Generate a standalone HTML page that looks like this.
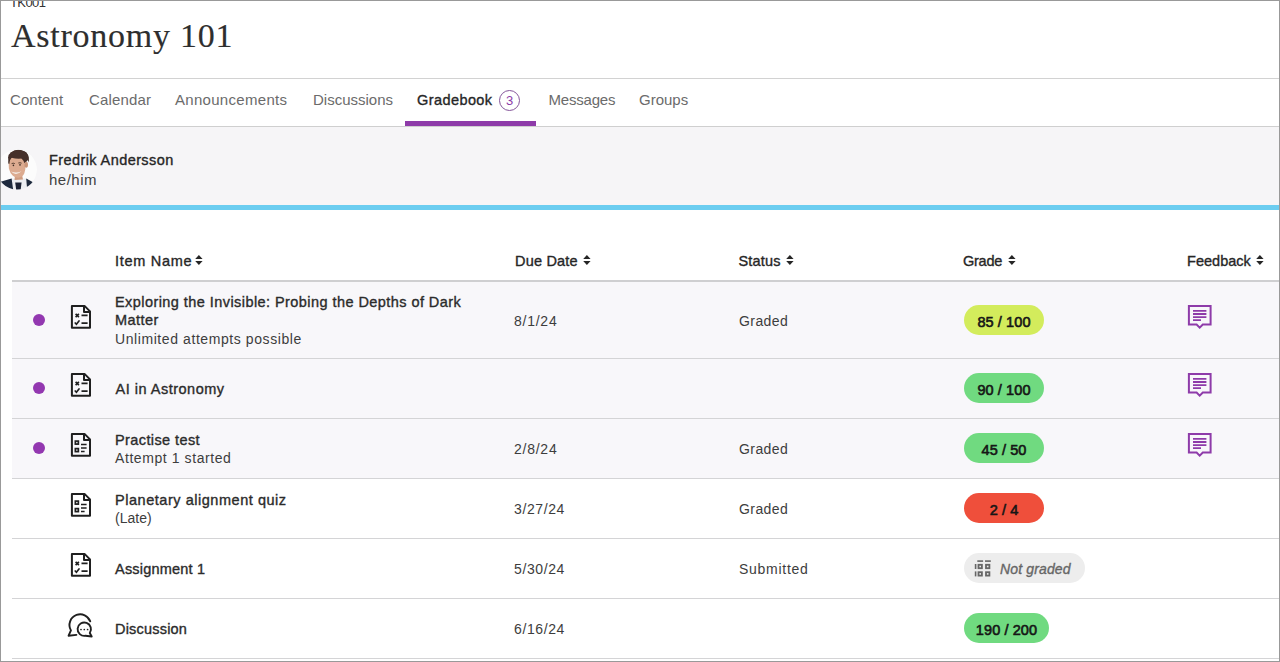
<!DOCTYPE html>
<html><head><meta charset="utf-8">
<style>
*{box-sizing:border-box;margin:0;padding:0}
html,body{width:1280px;height:662px;overflow:hidden;background:#fff}
body{font-family:"Liberation Sans",sans-serif;color:#262626;position:relative}
.t{position:absolute;white-space:nowrap;line-height:1}
.r{position:absolute;display:block}
.pill{position:absolute;height:30px;border-radius:15px;font-size:14.5px;font-weight:normal;-webkit-text-stroke:0.6px #161616;text-align:center;line-height:30px;letter-spacing:0.1px;font-family:"Liberation Sans",sans-serif}
.frame{position:absolute;left:0;top:0;width:1280px;height:662px;border:1px solid #999;z-index:10}
</style></head><body>
<div class="t" style="left:10px;top:-4px;font-size:13px;font-weight:normal;font-style:normal;letter-spacing:-0.6px;color:#333;font-family:'Liberation Sans',sans-serif;">TK001</div>
<div class="t" style="left:11px;top:19px;font-size:34px;letter-spacing:0.75px;color:#2e2e2e;font-family:'Liberation Serif',serif;line-height:1;-webkit-text-stroke:0.15px #2e2e2e">Astronomy 101</div>
<div class="r" style="left:0px;top:78px;width:1280px;height:1px;background:#d2d2d2;"></div>
<div class="t" style="left:10px;top:92px;font-size:15px;font-weight:normal;font-style:normal;letter-spacing:0.1px;color:#6b6b6b;font-family:'Liberation Sans',sans-serif;">Content</div>
<div class="t" style="left:89px;top:92px;font-size:15px;font-weight:normal;font-style:normal;letter-spacing:0.16px;color:#6b6b6b;font-family:'Liberation Sans',sans-serif;">Calendar</div>
<div class="t" style="left:175px;top:92px;font-size:15px;font-weight:normal;font-style:normal;letter-spacing:0.3px;color:#6b6b6b;font-family:'Liberation Sans',sans-serif;">Announcements</div>
<div class="t" style="left:313px;top:92px;font-size:15px;font-weight:normal;font-style:normal;letter-spacing:0px;color:#6b6b6b;font-family:'Liberation Sans',sans-serif;">Discussions</div>
<div class="t" style="left:417px;top:93px;font-size:14.5px;font-weight:normal;font-style:normal;letter-spacing:0.42px;color:#262626;font-family:'Liberation Sans',sans-serif;-webkit-text-stroke:0.35px #262626;">Gradebook</div>
<div class="r" style="left:499px;top:90px;width:21px;height:21px;border:1px solid #85559a;border-radius:50%"></div>
<div class="t" style="left:506px;top:94px;font-size:13px;font-weight:normal;font-style:normal;letter-spacing:0px;color:#8e3ba9;font-family:'Liberation Sans',sans-serif;">3</div>
<div class="t" style="left:548.5px;top:92px;font-size:15px;font-weight:normal;font-style:normal;letter-spacing:-0.2px;color:#6b6b6b;font-family:'Liberation Sans',sans-serif;">Messages</div>
<div class="t" style="left:639px;top:92px;font-size:15px;font-weight:normal;font-style:normal;letter-spacing:0px;color:#6b6b6b;font-family:'Liberation Sans',sans-serif;">Groups</div>
<div class="r" style="left:404.5px;top:121px;width:131.5px;height:4.6px;background:#8e3ba9;"></div>
<div class="r" style="left:0px;top:126px;width:1280px;height:1px;background:#cfcfcf;"></div>
<div class="r" style="left:0px;top:127px;width:1280px;height:78px;background:#f6f5f7;"></div>
<div class="r" style="left:0px;top:205px;width:1280px;height:5px;background:#6ccdf0;"></div>
<div class="t" style="left:49px;top:153px;font-size:14.5px;font-weight:normal;font-style:normal;letter-spacing:0.41px;color:#262626;font-family:'Liberation Sans',sans-serif;-webkit-text-stroke:0.35px #262626;">Fredrik Andersson</div>
<div class="t" style="left:49px;top:172px;font-size:15px;font-weight:normal;font-style:normal;letter-spacing:0.5px;color:#404040;font-family:'Liberation Sans',sans-serif;">he/him</div>
<svg class="r" style="left:-3px;top:149px" width="40" height="41" viewBox="0 0 40 41">
<defs><clipPath id="cc"><circle cx="20" cy="20.5" r="20"/></clipPath></defs>
<g clip-path="url(#cc)">
<circle cx="20" cy="20.5" r="20" fill="#fcfcfc"/>
<path d="M13.5,29.5 L30.5,29.5 L31,41 L13,41Z" fill="#eceef2"/>
<path d="M18.2,33.5 L24.6,33.5 L23.6,41 L19.2,41Z" fill="#1c2234"/>
<path d="M0,34.5 L4.4,32.4 L14.6,29.6 L16.2,41 L0,41Z" fill="#1e2a3e"/>
<path d="M29.2,29.6 L36.5,33.4 L40,36 L40,41 L30.2,41Z" fill="#1e2a3e"/>
<path d="M18,26 L25,26 L26,30.5 L17.5,31Z" fill="#cf9c80"/>
<ellipse cx="21.3" cy="8.5" rx="10.2" ry="7.5" fill="#45302a"/><ellipse cx="20" cy="17.8" rx="8.3" ry="11" transform="rotate(-12 20 17.8)" fill="#dcab90"/>
<ellipse cx="29.2" cy="15.8" rx="1.8" ry="3" fill="#c99478"/>
<path d="M14,22.5 Q19,27.5 24.5,22.2 Q19.5,24.6 14,22.5Z" fill="#f6efe9"/>
<path d="M14.6,14.6 Q16.3,13.8 17.8,14.6 M21.3,14 Q23,13.4 24.6,14.2" stroke="#4a3427" stroke-width="0.9" fill="none"/>
<circle cx="16.4" cy="16.4" r="0.8" fill="#3a2a22"/><circle cx="23" cy="15.9" r="0.8" fill="#3a2a22"/>
<path d="M11.3,14.5 Q10.5,5 17,1.8 Q23,-0.5 28.5,2.8 Q32.5,6 31.8,13.5 Q30.5,9.5 28,8.8 Q22,10.5 14.5,8.8 Q12.6,10.5 12.3,15Z" fill="#45302a"/>
</g></svg>
<div class="t" style="left:115px;top:254px;font-size:14.5px;font-weight:normal;font-style:normal;letter-spacing:0.71px;color:#262626;font-family:'Liberation Sans',sans-serif;-webkit-text-stroke:0.35px #262626;">Item Name</div>
<svg class="r" style="left:195px;top:255px" width="8" height="11" viewBox="0 0 8 11"><path d="M0.2,4 L3.9,0 L7.6,4Z M0.2,6 L3.9,10 L7.6,6Z" fill="#262626"/></svg>
<div class="t" style="left:515px;top:254px;font-size:14.5px;font-weight:normal;font-style:normal;letter-spacing:0.2px;color:#262626;font-family:'Liberation Sans',sans-serif;-webkit-text-stroke:0.35px #262626;">Due Date</div>
<svg class="r" style="left:582.5px;top:255px" width="8" height="11" viewBox="0 0 8 11"><path d="M0.2,4 L3.9,0 L7.6,4Z M0.2,6 L3.9,10 L7.6,6Z" fill="#262626"/></svg>
<div class="t" style="left:738.5px;top:254px;font-size:14.5px;font-weight:normal;font-style:normal;letter-spacing:0.2px;color:#262626;font-family:'Liberation Sans',sans-serif;-webkit-text-stroke:0.35px #262626;">Status</div>
<svg class="r" style="left:785.5px;top:255px" width="8" height="11" viewBox="0 0 8 11"><path d="M0.2,4 L3.9,0 L7.6,4Z M0.2,6 L3.9,10 L7.6,6Z" fill="#262626"/></svg>
<div class="t" style="left:963px;top:254px;font-size:14.5px;font-weight:normal;font-style:normal;letter-spacing:-0.25px;color:#262626;font-family:'Liberation Sans',sans-serif;-webkit-text-stroke:0.35px #262626;">Grade</div>
<svg class="r" style="left:1008px;top:255px" width="8" height="11" viewBox="0 0 8 11"><path d="M0.2,4 L3.9,0 L7.6,4Z M0.2,6 L3.9,10 L7.6,6Z" fill="#262626"/></svg>
<div class="t" style="left:1187px;top:254px;font-size:14.5px;font-weight:normal;font-style:normal;letter-spacing:0.02px;color:#262626;font-family:'Liberation Sans',sans-serif;-webkit-text-stroke:0.35px #262626;">Feedback</div>
<svg class="r" style="left:1255.5px;top:255px" width="8" height="11" viewBox="0 0 8 11"><path d="M0.2,4 L3.9,0 L7.6,4Z M0.2,6 L3.9,10 L7.6,6Z" fill="#262626"/></svg>
<div class="r" style="left:12px;top:280px;width:1268px;height:2px;background:#cfcfd1;"></div>
<div class="r" style="left:12px;top:282px;width:1268px;height:76px;background:#f8f7fa;"></div>
<div class="r" style="left:12px;top:358px;width:1268px;height:1px;background:#d4d4d6;"></div>
<div class="r" style="left:12px;top:359px;width:1268px;height:59px;background:#f8f7fa;"></div>
<div class="r" style="left:12px;top:418px;width:1268px;height:1px;background:#d4d4d6;"></div>
<div class="r" style="left:12px;top:419px;width:1268px;height:59px;background:#f8f7fa;"></div>
<div class="r" style="left:12px;top:478px;width:1268px;height:1px;background:#d4d4d6;"></div>
<div class="r" style="left:12px;top:479px;width:1268px;height:59px;background:#ffffff;"></div>
<div class="r" style="left:12px;top:538px;width:1268px;height:1px;background:#d4d4d6;"></div>
<div class="r" style="left:12px;top:539px;width:1268px;height:59px;background:#ffffff;"></div>
<div class="r" style="left:12px;top:598px;width:1268px;height:1px;background:#d4d4d6;"></div>
<div class="r" style="left:12px;top:599px;width:1268px;height:59px;background:#ffffff;"></div>
<div class="r" style="left:12px;top:658px;width:1268px;height:1px;background:#d4d4d6;"></div>
<div class="r" style="left:33px;top:313.6px;width:12px;height:12px;border-radius:50%;background:#9338b0"></div>
<svg class="r" style="left:70px;top:303.5px" width="22" height="26" viewBox="0 0 22 26"><path d="M1.9,1.9 H14.5 L20,7.4 V23.8 H1.9 Z M14,2.2 V7.9 H19.7" fill="none" stroke="#1f1f1f" stroke-width="2" stroke-linejoin="round"/><path d="M5.6,9.9 L8.9,13.1 M8.9,9.9 L5.6,13.1 M11.5,11.4 H17.6 M11.5,19.1 H17.6" stroke="#1f1f1f" stroke-width="1.7" fill="none"/><path d="M5.2,19 L6.4,20.2 L9,17" stroke="#1f1f1f" stroke-width="1.7" fill="none" stroke-linecap="round"/></svg>
<div class="t" style="left:115px;top:295px;font-size:14.5px;font-weight:normal;font-style:normal;letter-spacing:0.435px;color:#2b2b2b;font-family:'Liberation Sans',sans-serif;-webkit-text-stroke:0.35px #2b2b2b;">Exploring the Invisible: Probing the Depths of Dark</div>
<div class="t" style="left:115px;top:313px;font-size:14.5px;font-weight:normal;font-style:normal;letter-spacing:0.435px;color:#2b2b2b;font-family:'Liberation Sans',sans-serif;-webkit-text-stroke:0.35px #2b2b2b;">Matter</div>
<div class="t" style="left:115px;top:332px;font-size:14px;font-weight:normal;font-style:normal;letter-spacing:0.58px;color:#3d3d3d;font-family:'Liberation Sans',sans-serif;">Unlimited attempts possible</div>
<div class="t" style="left:514px;top:314px;font-size:14px;font-weight:normal;font-style:normal;letter-spacing:0.75px;color:#3d3d3d;font-family:'Liberation Sans',sans-serif;">8/1/24</div>
<div class="t" style="left:739px;top:314px;font-size:14px;font-weight:normal;font-style:normal;letter-spacing:0.42px;color:#3d3d3d;font-family:'Liberation Sans',sans-serif;">Graded</div>
<div class="pill" style="left:964px;top:305px;width:80px;background:#d3ec5c;color:#161616"><span style="position:relative;top:2px">85 / 100</span></div>
<svg class="r" style="left:1186px;top:303px" width="28" height="28" viewBox="0 0 28 28"><path d="M2.9,3 H24.6 V21.5 H16.8 L13.7,24.6 L10.6,21.5 H2.9 Z" fill="none" stroke="#8e3ba9" stroke-width="2"/><path d="M7,7.8 H20.4 M7,11 H20.4 M7,14.1 H20.4 M7,17.2 H15" stroke="#8e3ba9" stroke-width="1.8" fill="none"/></svg>
<div class="r" style="left:33px;top:382.2px;width:12px;height:12px;border-radius:50%;background:#9338b0"></div>
<svg class="r" style="left:70px;top:372px" width="22" height="26" viewBox="0 0 22 26"><path d="M1.9,1.9 H14.5 L20,7.4 V23.8 H1.9 Z M14,2.2 V7.9 H19.7" fill="none" stroke="#1f1f1f" stroke-width="2" stroke-linejoin="round"/><path d="M5.6,9.9 L8.9,13.1 M8.9,9.9 L5.6,13.1 M11.5,11.4 H17.6 M11.5,19.1 H17.6" stroke="#1f1f1f" stroke-width="1.7" fill="none"/><path d="M5.2,19 L6.4,20.2 L9,17" stroke="#1f1f1f" stroke-width="1.7" fill="none" stroke-linecap="round"/></svg>
<div class="t" style="left:115.5px;top:382px;font-size:14.5px;font-weight:normal;font-style:normal;letter-spacing:0.5px;color:#2b2b2b;font-family:'Liberation Sans',sans-serif;-webkit-text-stroke:0.35px #2b2b2b;">AI in Astronomy</div>
<div class="pill" style="left:964px;top:373px;width:80px;background:#70da80;color:#161616"><span style="position:relative;top:2px">90 / 100</span></div>
<svg class="r" style="left:1186px;top:371px" width="28" height="28" viewBox="0 0 28 28"><path d="M2.9,3 H24.6 V21.5 H16.8 L13.7,24.6 L10.6,21.5 H2.9 Z" fill="none" stroke="#8e3ba9" stroke-width="2"/><path d="M7,7.8 H20.4 M7,11 H20.4 M7,14.1 H20.4 M7,17.2 H15" stroke="#8e3ba9" stroke-width="1.8" fill="none"/></svg>
<div class="r" style="left:33px;top:441.8px;width:12px;height:12px;border-radius:50%;background:#9338b0"></div>
<svg class="r" style="left:70px;top:432px" width="22" height="26" viewBox="0 0 22 26"><path d="M1.9,1.9 H14.5 L20,7.4 V23.8 H1.9 Z M14,2.2 V7.9 H19.7" fill="none" stroke="#1f1f1f" stroke-width="2" stroke-linejoin="round"/><rect x="5.35" y="9.1" width="3" height="3" fill="none" stroke="#1f1f1f" stroke-width="1.7"/><rect x="5.35" y="16.6" width="3" height="3" fill="none" stroke="#1f1f1f" stroke-width="1.7"/><path d="M11,12.4 H16.6 M11,16 H16.6 M11,19.6 H14.6" stroke="#1f1f1f" stroke-width="1.5" fill="none"/></svg>
<div class="t" style="left:115px;top:433px;font-size:14.5px;font-weight:normal;font-style:normal;letter-spacing:0.4px;color:#2b2b2b;font-family:'Liberation Sans',sans-serif;-webkit-text-stroke:0.35px #2b2b2b;">Practise test</div>
<div class="t" style="left:115px;top:451px;font-size:14px;font-weight:normal;font-style:normal;letter-spacing:0.58px;color:#3d3d3d;font-family:'Liberation Sans',sans-serif;">Attempt 1 started</div>
<div class="t" style="left:514px;top:442px;font-size:14px;font-weight:normal;font-style:normal;letter-spacing:0.75px;color:#3d3d3d;font-family:'Liberation Sans',sans-serif;">2/8/24</div>
<div class="t" style="left:739px;top:442px;font-size:14px;font-weight:normal;font-style:normal;letter-spacing:0.42px;color:#3d3d3d;font-family:'Liberation Sans',sans-serif;">Graded</div>
<div class="pill" style="left:964px;top:433px;width:80px;background:#70da80;color:#161616"><span style="position:relative;top:2px">45 / 50</span></div>
<svg class="r" style="left:1186px;top:431px" width="28" height="28" viewBox="0 0 28 28"><path d="M2.9,3 H24.6 V21.5 H16.8 L13.7,24.6 L10.6,21.5 H2.9 Z" fill="none" stroke="#8e3ba9" stroke-width="2"/><path d="M7,7.8 H20.4 M7,11 H20.4 M7,14.1 H20.4 M7,17.2 H15" stroke="#8e3ba9" stroke-width="1.8" fill="none"/></svg>
<svg class="r" style="left:69.5px;top:492px" width="22" height="26" viewBox="0 0 22 26"><path d="M1.9,1.9 H14.5 L20,7.4 V23.8 H1.9 Z M14,2.2 V7.9 H19.7" fill="none" stroke="#1f1f1f" stroke-width="2" stroke-linejoin="round"/><rect x="5.35" y="9.1" width="3" height="3" fill="none" stroke="#1f1f1f" stroke-width="1.7"/><rect x="5.35" y="16.6" width="3" height="3" fill="none" stroke="#1f1f1f" stroke-width="1.7"/><path d="M11,12.4 H16.6 M11,16 H16.6 M11,19.6 H14.6" stroke="#1f1f1f" stroke-width="1.5" fill="none"/></svg>
<div class="t" style="left:115px;top:493px;font-size:14.5px;font-weight:normal;font-style:normal;letter-spacing:0.535px;color:#2b2b2b;font-family:'Liberation Sans',sans-serif;-webkit-text-stroke:0.35px #2b2b2b;">Planetary alignment quiz</div>
<div class="t" style="left:115px;top:511px;font-size:14px;font-weight:normal;font-style:normal;letter-spacing:0.02px;color:#3d3d3d;font-family:'Liberation Sans',sans-serif;">(Late)</div>
<div class="t" style="left:514px;top:502px;font-size:14px;font-weight:normal;font-style:normal;letter-spacing:0.6px;color:#3d3d3d;font-family:'Liberation Sans',sans-serif;">3/27/24</div>
<div class="t" style="left:739px;top:502px;font-size:14px;font-weight:normal;font-style:normal;letter-spacing:0.42px;color:#3d3d3d;font-family:'Liberation Sans',sans-serif;">Graded</div>
<div class="pill" style="left:964px;top:493px;width:80px;background:#ef4f3b;color:#161616"><span style="position:relative;top:2px">2 / 4</span></div>
<svg class="r" style="left:70px;top:552px" width="22" height="26" viewBox="0 0 22 26"><path d="M1.9,1.9 H14.5 L20,7.4 V23.8 H1.9 Z M14,2.2 V7.9 H19.7" fill="none" stroke="#1f1f1f" stroke-width="2" stroke-linejoin="round"/><path d="M5.6,9.9 L8.9,13.1 M8.9,9.9 L5.6,13.1 M11.5,11.4 H17.6 M11.5,19.1 H17.6" stroke="#1f1f1f" stroke-width="1.7" fill="none"/><path d="M5.2,19 L6.4,20.2 L9,17" stroke="#1f1f1f" stroke-width="1.7" fill="none" stroke-linecap="round"/></svg>
<div class="t" style="left:115px;top:562px;font-size:14.5px;font-weight:normal;font-style:normal;letter-spacing:0.21px;color:#2b2b2b;font-family:'Liberation Sans',sans-serif;-webkit-text-stroke:0.35px #2b2b2b;">Assignment 1</div>
<div class="t" style="left:514px;top:562px;font-size:14px;font-weight:normal;font-style:normal;letter-spacing:0.6px;color:#3d3d3d;font-family:'Liberation Sans',sans-serif;">5/30/24</div>
<div class="t" style="left:739px;top:562px;font-size:14px;font-weight:normal;font-style:normal;letter-spacing:0.73px;color:#3d3d3d;font-family:'Liberation Sans',sans-serif;">Submitted</div>
<div class="r" style="left:964px;top:553px;width:121px;height:30px;border-radius:15px;background:#ededed"></div>
<svg class="r" style="left:973px;top:559px" width="20" height="20" viewBox="0 0 20 20"><rect x="4.3" y="1.3" width="5.8" height="1.6" fill="#666"/><rect x="12" y="1.3" width="5.8" height="1.6" fill="#666"/><rect x="1.8" y="5" width="1.6" height="5" fill="#666"/><rect x="1.8" y="12.4" width="1.6" height="5" fill="#666"/><rect x="5.5" y="5.8" width="3.4" height="3.4" fill="none" stroke="#666" stroke-width="1.8"/><rect x="13" y="5.8" width="3.4" height="3.4" fill="none" stroke="#666" stroke-width="1.8"/><rect x="5.5" y="13.2" width="3.4" height="3.4" fill="none" stroke="#666" stroke-width="1.8"/><rect x="13" y="13.2" width="3.4" height="3.4" fill="none" stroke="#666" stroke-width="1.8"/></svg>
<div class="t" style="left:1000px;top:562px;font-size:14px;font-weight:normal;font-style:italic;letter-spacing:0.14px;color:#666;font-family:'Liberation Sans',sans-serif;-webkit-text-stroke:0.35px #666;">Not graded</div>
<svg class="r" style="left:62px;top:608px" width="36" height="36" viewBox="0 0 36 36"><path d="M14.4,26.9 L6.6,27.7 L8.93,22.35 A10.7,10.7 0 0 1 14.54,6.95 A10.7,10.7 0 0 1 28.25,13.34" fill="none" stroke="#1f1f1f" stroke-width="1.9" stroke-linejoin="round" stroke-linecap="round"/><path d="M27.79,25.04 A6.7,6.7 0 1 0 23.46,27.8 L29.7,28.5 Z" fill="none" stroke="#1f1f1f" stroke-width="1.9" stroke-linejoin="round"/><circle cx="19.0" cy="21.5" r="0.85" fill="#1f1f1f"/><circle cx="22.3" cy="21.5" r="0.85" fill="#1f1f1f"/><circle cx="25.6" cy="21.5" r="0.85" fill="#1f1f1f"/></svg>
<div class="t" style="left:115px;top:622px;font-size:14.5px;font-weight:normal;font-style:normal;letter-spacing:0.2px;color:#2b2b2b;font-family:'Liberation Sans',sans-serif;-webkit-text-stroke:0.35px #2b2b2b;">Discussion</div>
<div class="t" style="left:514px;top:622px;font-size:14px;font-weight:normal;font-style:normal;letter-spacing:0.6px;color:#3d3d3d;font-family:'Liberation Sans',sans-serif;">6/16/24</div>
<div class="pill" style="left:964px;top:613px;width:85px;background:#70da80;color:#161616"><span style="position:relative;top:2px">190 / 200</span></div>
<div class="frame"></div>
</body></html>
